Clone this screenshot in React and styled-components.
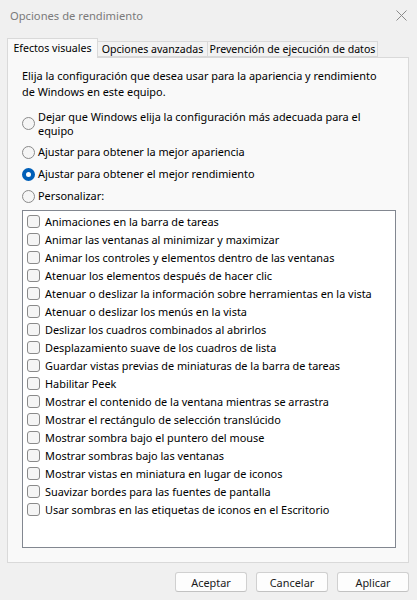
import React from "react";
import styled, { createGlobalStyle } from "styled-components";

const Global = createGlobalStyle`
  html, body { margin: 0; padding: 0; background: #f0f0f0; }
  body { font-family: "Segoe UI", "Noto Sans", sans-serif; font-size: 10.9px; color: #000; }
`;

const Window = styled.div`
  width: 417px;
  height: 600px;
  background: #f0f0f0;
  display: flex;
  flex-direction: column;
`;

const TitleBar = styled.div`
  height: 30px;
  flex: none;
  display: flex;
  align-items: center;
  justify-content: space-between;
  padding: 0 10px 0 10px;
  color: #7a7a7a;
  font-size: 11.2px;
`;

const Body = styled.div`
  padding: 8px 8px 0 7px;
  display: flex;
  flex-direction: column;
`;

const Tabs = styled.div`
  display: flex;
  align-items: flex-end;
  height: 19px;
  position: relative;
  z-index: 1;
`;

const Tab = styled.div`
  box-sizing: border-box;
  width: ${(p) => p.$w}px;
  height: ${(p) => (p.$active ? "20px" : "16px")};
  display: flex;
  align-items: center;
  justify-content: center;
  font-size: 10.6px;
  padding-bottom: ${(p) => (p.$active ? "2px" : "0")};
  background: ${(p) => (p.$active ? "#f9f9f9" : "#f2f2f2")};
  border: 1px solid #d9d9d9;
  border-bottom: ${(p) => (p.$active ? "none" : "1px solid #d9d9d9")};
  margin-left: ${(p) => (p.$first ? "0" : "-1px")};
  margin-bottom: ${(p) => (p.$active ? "-1px" : "0")};
  white-space: nowrap;
  position: relative;
  z-index: ${(p) => (p.$active ? 2 : 1)};
`;

const Panel = styled.div`
  height: 506px;
  box-sizing: border-box;
  background: #f9f9f9;
  border: 1px solid #d9d9d9;
  padding: 10px 14px 0 14px;
  display: flex;
  flex-direction: column;
`;

const Intro = styled.p`
  margin: 0 0 9px 0;
  max-width: 366px;
  line-height: 16px;
`;

const RadioRow = styled.label`
  display: flex;
  align-items: flex-start;
  gap: 3px;
  line-height: 14px;
  padding: 1px 0;
  margin-bottom: ${(p) => (p.$tight ? "5px" : "6px")};
`;

const RadioCircle = styled.span`
  flex: none;
  width: 13px;
  height: 13px;
  box-sizing: border-box;
  border-radius: 50%;
  margin-top: ${(p) => (p.$offset ? "7px" : "1px")};
  border: ${(p) => (p.$checked ? "4px solid #005fb8" : "1px solid #8a8a8a")};
  background: ${(p) => (p.$checked ? "#fff" : "#f5f5f5")};
`;

const ListBox = styled.div`
  margin: 0;
  width: 374px;
  height: 338px;
  box-sizing: border-box;
  border: 1px solid #828790;
  background: #fff;
  padding: 1px 0 0 4px;
`;

const CheckRow = styled.div`
  display: flex;
  align-items: center;
  height: 18px;
  gap: 5px;
  white-space: nowrap;
`;

const CheckBox = styled.span`
  flex: none;
  width: 13px;
  height: 13px;
  box-sizing: border-box;
  border: 1px solid #8a8a8a;
  border-radius: 3px;
  background: #f5f5f5;
`;

const Footer = styled.div`
  display: flex;
  justify-content: flex-end;
  gap: 9px;
  padding: 9px 0 0 0;
`;

const Button = styled.button`
  width: 72px;
  height: 20px;
  box-sizing: border-box;
  border: 1px solid #d0d0d0;
  border-bottom-color: #c2c2c2;
  border-radius: 3px;
  background: #fdfdfd;
  font-family: inherit;
  font-size: 10.9px;
  color: #1a1a1a;
  padding: 0;
`;

const options = [
  "Animaciones en la barra de tareas",
  "Animar las ventanas al minimizar y maximizar",
  "Animar los controles y elementos dentro de las ventanas",
  "Atenuar los elementos después de hacer clic",
  "Atenuar o deslizar la información sobre herramientas en la vista",
  "Atenuar o deslizar los menús en la vista",
  "Deslizar los cuadros combinados al abrirlos",
  "Desplazamiento suave de los cuadros de lista",
  "Guardar vistas previas de miniaturas de la barra de tareas",
  "Habilitar Peek",
  "Mostrar el contenido de la ventana mientras se arrastra",
  "Mostrar el rectángulo de selección translúcido",
  "Mostrar sombra bajo el puntero del mouse",
  "Mostrar sombras bajo las ventanas",
  "Mostrar vistas en miniatura en lugar de iconos",
  "Suavizar bordes para las fuentes de pantalla",
  "Usar sombras en las etiquetas de iconos en el Escritorio",
];

const CloseIcon = () => (
  <svg width="11" height="11" viewBox="0 0 11 11">
    <path d="M0.5 0.5 L10.5 10.5 M10.5 0.5 L0.5 10.5" stroke="#8a8a8a" strokeWidth="1" fill="none" />
  </svg>
);

export default function App() {
  return (
    <>
      <Global />
      <Window>
        <TitleBar>
          <span>Opciones de rendimiento</span>
          <CloseIcon />
        </TitleBar>
        <Body>
          <Tabs>
            <Tab $active $first $w={91}>Efectos visuales</Tab>
            <Tab $w={111}>Opciones avanzadas</Tab>
            <Tab $w={171}>Prevención de ejecución de datos</Tab>
          </Tabs>
          <Panel>
            <Intro>
              Elija la configuración que desea usar para la apariencia y rendimiento de Windows en este equipo.
            </Intro>
            <RadioRow $tight>
              <RadioCircle $offset />
              <span>Dejar que Windows elija la configuración más adecuada para el equipo</span>
            </RadioRow>
            <RadioRow>
              <RadioCircle />
              <span>Ajustar para obtener la mejor apariencia</span>
            </RadioRow>
            <RadioRow>
              <RadioCircle $checked />
              <span>Ajustar para obtener el mejor rendimiento</span>
            </RadioRow>
            <RadioRow>
              <RadioCircle />
              <span>Personalizar:</span>
            </RadioRow>
            <ListBox>
              {options.map((o) => (
                <CheckRow key={o}>
                  <CheckBox />
                  <span>{o}</span>
                </CheckRow>
              ))}
            </ListBox>
          </Panel>
          <Footer>
            <Button>Aceptar</Button>
            <Button>Cancelar</Button>
            <Button>Aplicar</Button>
          </Footer>
        </Body>
      </Window>
    </>
  );
}
